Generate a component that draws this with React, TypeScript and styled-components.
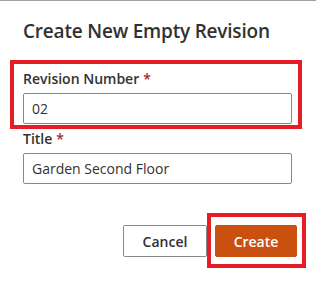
import styled, { createGlobalStyle } from 'styled-components';

const GlobalStyle = createGlobalStyle`
  html, body {
    margin: 0;
    padding: 0;
    background: #ffffff;
  }
  body {
    font-family: "Open Sans", "Noto Sans", "Liberation Sans", sans-serif;
    color: #323130;
  }
`;

const Dialog = styled.div`
  width: 316px;
  height: 304px;
  box-sizing: border-box;
  border-top: 1px solid #a19f9d;
  padding: 16px 24px 0 23px;
  background: #ffffff;
`;

const Heading = styled.h1`
  margin: 0 0 24px 0;
  font-size: 19px;
  line-height: 28px;
  font-weight: 600;
  color: #323130;
  letter-spacing: -0.2px;
`;

const Form = styled.form`
  display: flex;
  flex-direction: column;
  gap: 5px;
`;

const Field = styled.div<{ $marked?: boolean }>`
  position: relative;
  display: flex;
  flex-direction: column;

  ${({ $marked }) =>
    $marked &&
    `
    &::after {
      content: '';
      position: absolute;
      top: -9px;
      bottom: -5px;
      left: -13px;
      right: -10px;
      border: 4px solid #e81c24;
      pointer-events: none;
    }
  `}
`;

const Label = styled.label`
  font-size: 14px;
  line-height: 20px;
  font-weight: 600;
  color: #323130;
  padding-bottom: 4px;
`;

const Required = styled.span`
  color: #a4262c;
  margin-left: 4px;
`;

const Input = styled.input`
  box-sizing: border-box;
  width: 100%;
  height: 31px;
  margin: 0;
  padding: 0 8px;
  border: 1px solid #8a8886;
  border-radius: 2px;
  font-family: inherit;
  font-size: 14px;
  color: #323130;
  background: #ffffff;
  outline: none;
`;

const Footer = styled.div`
  display: flex;
  justify-content: flex-end;
  gap: 8px;
  margin-top: 36px;
  margin-right: -5px;
`;

const Button = styled.button<{ $primary?: boolean; $marked?: boolean }>`
  position: relative;
  box-sizing: border-box;
  height: 32px;
  min-width: ${({ $primary }) => ($primary ? '82px' : '84px')};
  padding: 0 16px;
  border-radius: 2px;
  border: 1px solid ${({ $primary }) => ($primary ? '#ca5010' : '#8a8886')};
  background: ${({ $primary }) => ($primary ? '#ca5010' : '#ffffff')};
  color: ${({ $primary }) => ($primary ? '#ffffff' : '#323130')};
  font-family: inherit;
  font-size: 14px;
  font-weight: 600;
  cursor: pointer;

  ${({ $marked }) =>
    $marked &&
    `
    &::after {
      content: '';
      position: absolute;
      top: -13px;
      bottom: -12px;
      left: -9px;
      right: -10px;
      border: 4px solid #e81c24;
      pointer-events: none;
    }
  `}
`;

export default function App() {
  return (
    <>
      <GlobalStyle />
      <Dialog>
        <Heading>Create New Empty Revision</Heading>
        <Form onSubmit={(e) => e.preventDefault()}>
          <Field $marked>
            <Label>
              Revision Number<Required>*</Required>
            </Label>
            <Input defaultValue="02" />
          </Field>
          <Field>
            <Label>
              Title<Required>*</Required>
            </Label>
            <Input defaultValue="Garden Second Floor" />
          </Field>
          <Footer>
            <Button type="button">Cancel</Button>
            <Button type="submit" $primary $marked>
              Create
            </Button>
          </Footer>
        </Form>
      </Dialog>
    </>
  );
}
